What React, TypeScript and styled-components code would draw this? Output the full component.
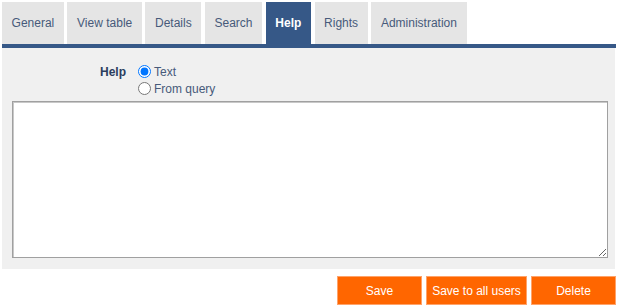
import { FC, useState } from 'react'
import styled, { createGlobalStyle } from 'styled-components'

const GlobalStyle = createGlobalStyle`
  html, body {
    margin: 0;
    padding: 0;
    background: #ffffff;
  }
  body {
    font-family: 'Liberation Sans', Arial, sans-serif;
    font-size: 12px;
  }
`

const tabs = ['General', 'View table', 'Details', 'Search', 'Help', 'Rights', 'Administration']

const App: FC = () => {
  const [active, setActive] = useState('Help')
  const [source, setSource] = useState('text')

  return (
    <Page>
      <GlobalStyle />
      <TabBar>
        {tabs.map((t) => (
          <Tab key={t} $active={t === active} onClick={() => setActive(t)}>
            {t}
          </Tab>
        ))}
      </TabBar>
      <Panel>
        <FormRow>
          <Label>Help</Label>
          <Options>
            <Option>
              <Radio
                type="radio"
                name="help-source"
                checked={source === 'text'}
                onChange={() => setSource('text')}
              />
              Text
            </Option>
            <Option>
              <Radio
                type="radio"
                name="help-source"
                checked={source === 'query'}
                onChange={() => setSource('query')}
              />
              From query
            </Option>
          </Options>
        </FormRow>
        <HelpText />
      </Panel>
      <ButtonRow>
        <ActionButton $width={85}>Save</ActionButton>
        <ActionButton $width={101}>Save to all users</ActionButton>
        <ActionButton $width={85}>Delete</ActionButton>
      </ButtonRow>
    </Page>
  )
}

export default App

const Page = styled.div`
  width: 614px;
  padding: 2px 2px 0 2px;
`

const TabBar = styled.div`
  display: flex;
  gap: 3.6px;
  border-bottom: 4px solid #365887;
`

const Tab = styled.div<{ $active?: boolean }>`
  height: 42px;
  padding: 0 9.6px;
  display: flex;
  align-items: center;
  font-size: 12px;
  font-weight: ${(p) => (p.$active ? 700 : 400)};
  color: ${(p) => (p.$active ? '#ffffff' : '#475a7a')};
  background: ${(p) => (p.$active ? '#365887' : '#e5e5e5')};
  cursor: pointer;
`

const Panel = styled.div`
  width: 603px;
  background: #f0f0f0;
  padding: 15px 0 11px 10px;
`

const FormRow = styled.div`
  display: grid;
  grid-template-columns: 114px auto;
  column-gap: 12px;
  align-items: start;
`

const Label = styled.div`
  text-align: right;
  font-weight: 700;
  color: #2b3d5e;
  line-height: 17px;
  padding-top: 1px;
`

const Options = styled.div`
  display: flex;
  flex-direction: column;
`

const Option = styled.label`
  display: flex;
  align-items: center;
  gap: 3px;
  height: 17px;
  color: #475a7a;
`

const Radio = styled.input`
  width: 13px;
  height: 13px;
  margin: 0;
  accent-color: #0075ff;
`

const HelpText = styled.textarea`
  display: block;
  box-sizing: border-box;
  width: 596px;
  height: 157px;
  margin-top: 4px;
  border: 1px solid #a0a0a0;
  box-shadow: inset 1px 1px 0 #c8c8c8;
  background: #ffffff;
  font-family: inherit;
  font-size: 12px;
`

const ButtonRow = styled.div`
  display: flex;
  justify-content: flex-end;
  gap: 4px;
  margin-top: 7px;
`

const ActionButton = styled.button<{ $width: number }>`
  width: ${(p) => p.$width}px;
  height: 29px;
  box-sizing: border-box;
  background: #ff6600;
  border: 1px solid #ffa36a;
  color: #ffffff;
  font-family: 'Liberation Sans', Arial, sans-serif;
  font-size: 12px;
  padding: 0;
  cursor: pointer;
`
